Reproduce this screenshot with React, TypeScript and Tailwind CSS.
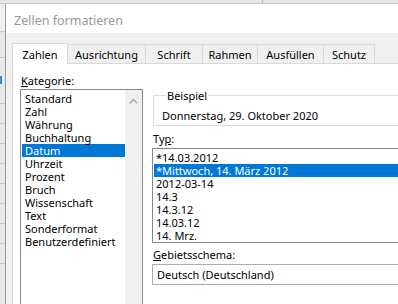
const tabs = [
  { label: "Zahlen", w: "w-[56px]", active: true },
  { label: "Ausrichtung", w: "w-[79px]" },
  { label: "Schrift", w: "w-[58px]" },
  { label: "Rahmen", w: "w-[56px]" },
  { label: "Ausfüllen", w: "w-[67px]" },
  { label: "Schutz", w: "w-[52px]" },
];

const kategorien = [
  "Standard",
  "Zahl",
  "Währung",
  "Buchhaltung",
  "Datum",
  "Uhrzeit",
  "Prozent",
  "Bruch",
  "Wissenschaft",
  "Text",
  "Sonderformat",
  "Benutzerdefiniert",
];

const typen = [
  "*14.03.2012",
  "*Mittwoch, 14. März 2012",
  "2012-03-14",
  "14.3",
  "14.3.12",
  "14.03.12",
  "14. Mrz.",
];

export default function App() {
  return (
    <div className="flex h-[304px] w-[398px] flex-col overflow-hidden bg-[#e6e6e6] font-['Segoe_UI','Noto_Sans',sans-serif] text-[11px] leading-[13px] text-black antialiased">
      {/* Excel column headers behind the dialog */}
      <div className="flex h-[4px] shrink-0 border-b border-[#c6c6c6] bg-[#e6e6e6]">
        <div className="w-[263px] border-r border-[#bdbdbd]" />
      </div>

      <div className="flex min-h-0 flex-1">
        {/* Excel row headers */}
        <div className="flex w-[6px] shrink-0 flex-col border-r border-[#9a9a9a] bg-[#e8e8e8]">
          <div className="h-[28px] border-b border-[#c8c8c8] bg-[#f0f0f0]" />
          <div className="h-[26px] border-b border-[#c8c8c8]" />
          <div className="mt-[18px] h-[8px] w-[2px] bg-[#3c8ad6]" />
          <div className="h-[20px] border-b border-[#c8c8c8]" />
          <div className="h-[20px] border-b border-[#c8c8c8]" />
          <div className="h-[20px] border-b border-[#c8c8c8]" />
          <div className="h-[20px] border-b border-[#c8c8c8]" />
          <div className="h-[20px] border-b border-[#c8c8c8]" />
          <div className="h-[20px] border-b border-[#c8c8c8]" />
          <div className="h-[20px] border-b border-[#c8c8c8]" />
          <div className="h-[20px] border-b border-[#c8c8c8]" />
          <div className="h-[20px] border-b border-[#c8c8c8]" />
        </div>

        {/* Dialog */}
        <div className="flex min-w-0 flex-1 flex-col bg-[#f0f0f0]">
          <div className="flex h-[29px] shrink-0 items-center bg-white pl-[8px] pt-[3px] text-[12.5px] text-[#999999]">
            Zellen formatieren
          </div>

          <div className="flex h-[30px] shrink-0 items-end pl-[6px]">
            {tabs.map((t) =>
              t.active ? (
                <div
                  key={t.label}
                  className={`${t.w} relative z-10 -mb-px flex h-[21px] shrink-0 items-center justify-center border border-b-0 border-[#d9d9d9] bg-white`}
                >
                  {t.label}
                </div>
              ) : (
                <div
                  key={t.label}
                  className={`${t.w} -ml-px flex h-[19px] shrink-0 items-center justify-center border border-b-0 border-[#d9d9d9] bg-[#f0f0f0] first:ml-0`}
                >
                  {t.label}
                </div>
              )
            )}
          </div>

          {/* Tab page */}
          <div className="ml-[6px] flex min-h-0 w-[420px] flex-1 gap-[9px] border-l border-t border-[#d9d9d9] bg-white pl-[7px] pt-[10px]">
            <div className="flex w-[123px] shrink-0 flex-col">
              <div className="h-[13px] pl-px">
                <span className="underline">K</span>ategorie:
              </div>
              <div className="mt-[2px] flex flex-1 border border-b-0 border-[#828790]">
                <div className="flex-1 pl-px pt-[2px]">
                  {kategorien.map((k) => (
                    <div
                      key={k}
                      className={`h-[13px] pl-[3px] ${k === "Datum" ? "bg-[#0078d7] text-white" : ""}`}
                    >
                      {k}
                    </div>
                  ))}
                </div>
                <div className="flex w-[17px] shrink-0 justify-center bg-[#f0f0f0] pt-[8px]">
                  <svg width="9" height="6" viewBox="0 0 9 6" fill="none">
                    <path d="M0.8 5.2 L4.5 1.5 L8.2 5.2" stroke="#a6a6a6" strokeWidth="1.5" />
                  </svg>
                </div>
              </div>
            </div>

            <div className="mt-[15px] flex flex-1 flex-col">
              <fieldset className="ml-px h-[37px] border border-[#dcdcdc] pl-[8px]">
                <legend className="ml-[4px] px-px leading-[13px]">Beispiel</legend>
                <div className="pt-[7px]">Donnerstag, 29. Oktober 2020</div>
              </fieldset>

              <div className="mt-[6px] h-[13px] pl-px">
                Ty<span className="underline">p</span>:
              </div>
              <div className="mt-[3px] h-[95px] border border-[#828790] pt-[2px]">
                {typen.map((t, i) => (
                  <div
                    key={t}
                    className={`ml-px h-[13px] pl-[2px] ${i === 1 ? "bg-[#0078d7] text-white" : ""}`}
                  >
                    {t}
                  </div>
                ))}
              </div>

              <div className="mt-[5px] h-[13px] pl-px">
                <span className="underline">G</span>ebietsschema:
              </div>
              <div className="mt-[3px] flex h-[21px] items-center border border-[#adadad] bg-white pl-[4px]">
                Deutsch (Deutschland)
              </div>
            </div>
          </div>
        </div>
      </div>
    </div>
  );
}
